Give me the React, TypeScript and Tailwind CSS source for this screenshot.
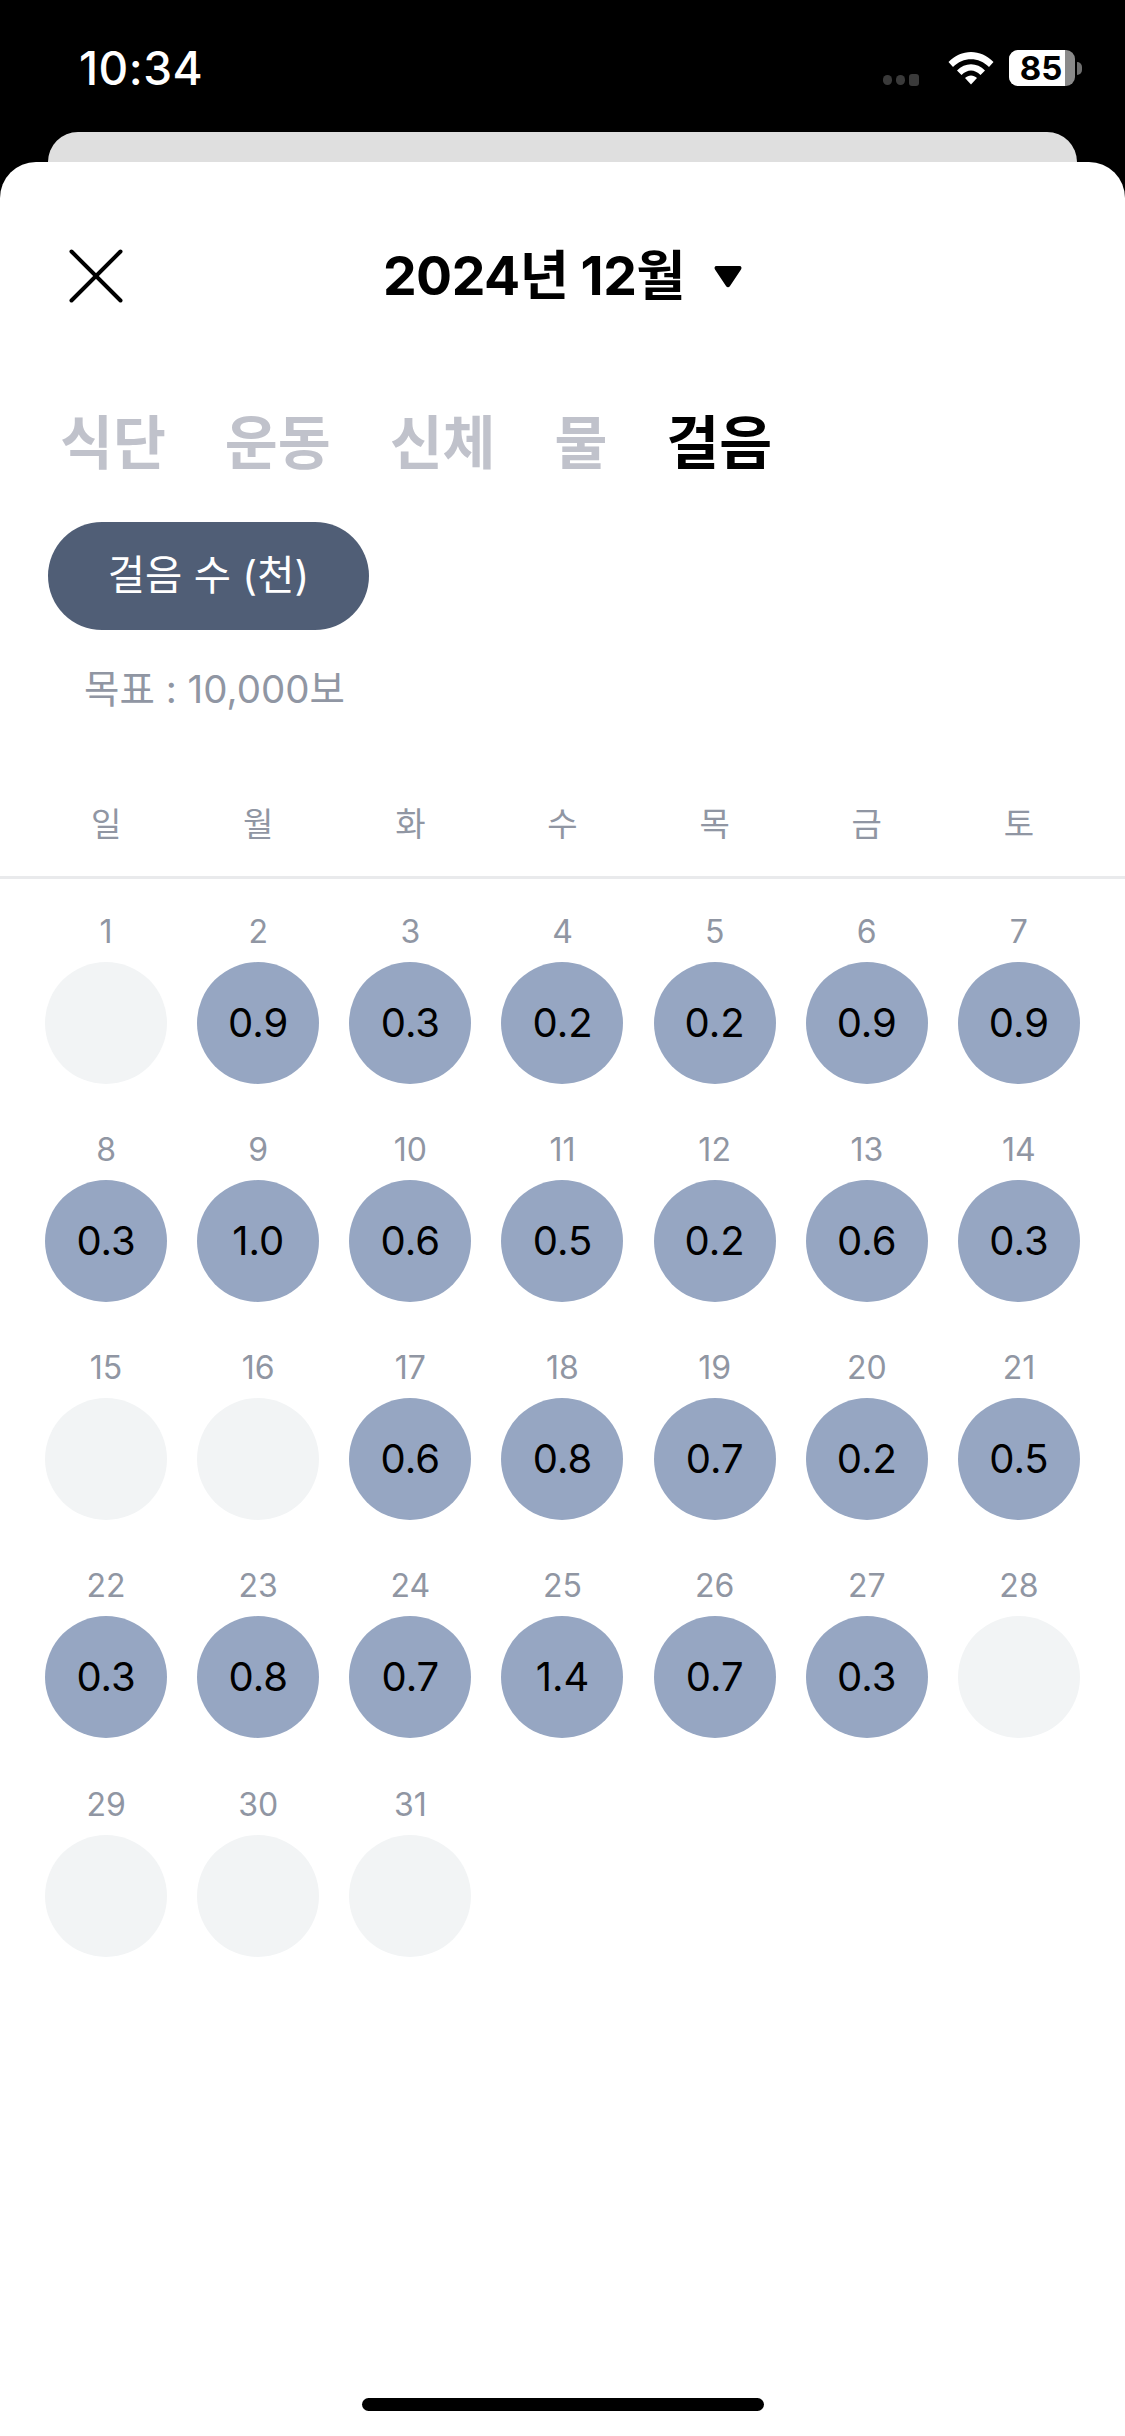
const font = { fontFamily: '"Inter", "Noto Sans CJK KR", sans-serif' };

const weekdays = ["일", "월", "화", "수", "목", "금", "토"];
const tabs = ["식단", "운동", "신체", "물", "걸음"];
const values: (string | null)[] = [
  null, "0.9", "0.3", "0.2", "0.2", "0.9", "0.9",
  "0.3", "1.0", "0.6", "0.5", "0.2", "0.6", "0.3",
  null, null, "0.6", "0.8", "0.7", "0.2", "0.5",
  "0.3", "0.8", "0.7", "1.4", "0.7", "0.3", null,
  null, null, null,
];

function StatusBar() {
  return (
    <div className="h-[132px] shrink-0 flex items-start justify-between pl-[79px] pr-[43px] pt-[43px] text-white">
      <span className="text-[46px] leading-[50px] font-medium tracking-[0.5px]">10:34</span>
      <div className="flex items-center mt-[7px]">
        <div className="flex items-center gap-[4px] mr-[29px] mt-[24px]">
          <span className="w-[9px] h-[10px] rounded-full bg-[#3a3a3a]" />
          <span className="w-[9px] h-[10px] rounded-full bg-[#3a3a3a]" />
          <span className="w-[10px] h-[12px] rounded-[3px] bg-[#3a3a3a]" />
        </div>
        <svg width="46" height="34" viewBox="0 0 46 34" className="mr-[15px]">
          <path d="M0.5 11 C13 -2.5 33 -2.5 45.5 11 L41 16 C31 5.5 15 5.5 5 16 Z" fill="#fff" />
          <path d="M9 19.5 C17 11 29 11 37 19.5 L32.5 24 C26.5 18 19.5 18 13.5 24 Z" fill="#fff" />
          <path d="M17 27 C20.5 23.5 25.5 23.5 29 27 L23 33.5 Z" fill="#fff" />
        </svg>
        <div className="w-[66px] h-[36px] rounded-[9px] bg-[#8a8a8a]">
          <div className="w-[56px] h-full rounded-l-[9px] bg-white flex items-center justify-center">
            <span className="text-[33px] leading-[36px] font-bold text-black ml-[8px]">85</span>
          </div>
        </div>
        <div className="w-[5px] h-[13px] rounded-r-full bg-[#6f6f6f] ml-[2px]" />
      </div>
    </div>
  );
}

function DayCell({ day, value }: { day: number; value: string | null }) {
  return (
    <div className="flex flex-col items-center">
      <span className="h-[40px] mb-[10px] text-[32px] leading-[40px] text-[#9096a3]">{day}</span>
      <div
        className={
          value
            ? "w-[122px] h-[122px] rounded-full bg-[#96a6c2] flex items-center justify-center"
            : "w-[122px] h-[122px] rounded-full bg-[#f2f4f5]"
        }
      >
        {value && <span className="text-[40px] leading-none text-black">{value}</span>}
      </div>
    </div>
  );
}

export default function App() {
  return (
    <div className="w-[1125px] h-[2436px] bg-black flex flex-col overflow-hidden" style={font}>
      <StatusBar />
      <div className="h-[30px] shrink-0 mx-[48px] bg-[#dfdfdf] rounded-t-[30px]" />
      <div className="flex-1 bg-white rounded-t-[36px] pt-[74px] flex flex-col">
        <div className="h-[80px] grid grid-cols-[1fr_auto_1fr] items-center">
          <svg width="54" height="54" viewBox="0 0 54 54" className="ml-[69px]">
            <path d="M2.5 2.5 L51.5 51.5 M51.5 2.5 L2.5 51.5" stroke="#000" strokeWidth="4" strokeLinecap="round" fill="none" />
          </svg>
          <div className="flex items-center">
            <span className="text-[53.5px] leading-[80px] font-bold text-black tracking-[-0.5px]">2024년 12월</span>
            <svg width="28" height="23" viewBox="0 0 28 23" className="ml-[29px]">
              <path d="M2.5 1 H25.5 C27.5 1 28 3 27 4.5 L16 21 C15 22.6 13 22.6 12 21 L1 4.5 C0 3 0.5 1 2.5 1 Z" fill="#000" />
            </svg>
          </div>
          <div />
        </div>

        <div className="mt-[92px] h-[70px] flex items-center gap-[59px] pl-[60px]">
          {tabs.map((t) => (
            <span
              key={t}
              className={
                t === "걸음"
                  ? "text-[57.5px] leading-[70px] font-bold text-black"
                  : "text-[57.5px] leading-[70px] font-semibold text-[#c0c2cb]"
              }
            >
              {t}
            </span>
          ))}
        </div>

        <div className="mt-[44px] ml-[48px] w-[321px] h-[108px] rounded-full bg-[#505e76] flex items-center justify-center">
          <span className="text-[40.5px] leading-none text-white">걸음 수 (천)</span>
        </div>

        <div className="mt-[34px] ml-[84px] h-[50px] text-[38.5px] leading-[50px] text-[#9096a3]">목표 : 10,000보</div>

        <div className="mt-[84.5px] px-[30px] pb-[27px] grid grid-cols-7 border-b-[3px] border-[#e9eaec]">
          {weekdays.map((w) => (
            <span key={w} className="h-[50px] text-center text-[33px] leading-[50px] text-[#9096a3]">
              {w}
            </span>
          ))}
        </div>

        <div className="pt-[33px] px-[30px] grid grid-cols-7 gap-y-[46.25px]">
          {values.map((v, i) => (
            <DayCell key={i} day={i + 1} value={v} />
          ))}
        </div>

        <div className="mt-auto mb-[25px] mx-auto w-[402px] h-[13px] rounded-full bg-black" />
      </div>
    </div>
  );
}
